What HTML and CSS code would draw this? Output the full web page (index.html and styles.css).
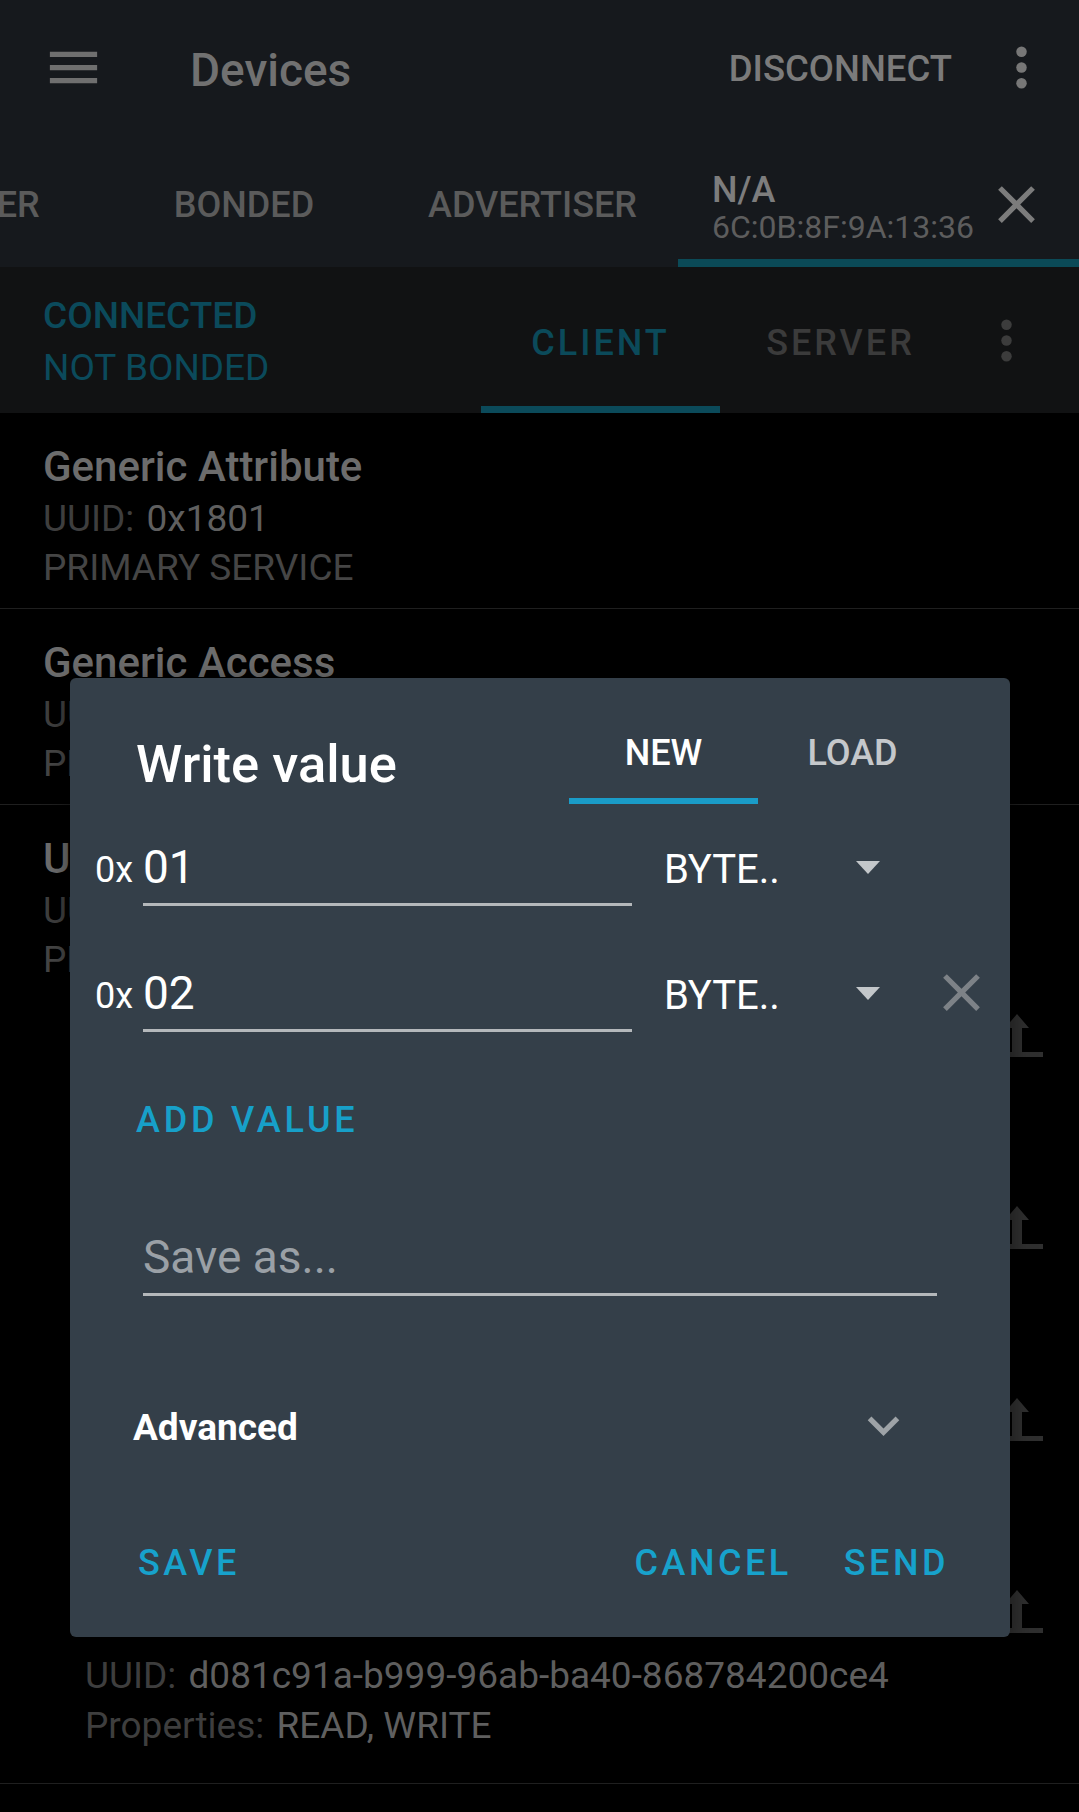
FILE: index.html
```html
<!DOCTYPE html>
<html>
<head>
<meta charset="utf-8">
<link rel="stylesheet" href="styles.css">
</head>
<body>
<div class="screen">
  <header class="appbar">
    <div class="toolbar">
      <svg class="icon63 menu" viewBox="0 0 24 24"><path d="M3 18h18v-2H3v2zm0-5h18v-2H3v2zm0-7v2h18V6H3z"/></svg>
      <div class="title">Devices</div>
      <div class="disconnect">DISCONNECT</div>
      <svg class="icon63 more" viewBox="0 0 24 24"><circle cx="12" cy="6" r="2"/><circle cx="12" cy="12" r="2"/><circle cx="12" cy="18" r="2"/></svg>
    </div>
    <div class="tabs">
      <div class="tab tab-scanner">SCANNER</div>
      <div class="tab tab-bonded">BONDED</div>
      <div class="tab tab-adv">ADVERTISER</div>
      <div class="tab tab-device">
        <div class="dev-text">
          <div class="dev-name">N/A</div>
          <div class="dev-mac">6C:0B:8F:9A:13:36</div>
        </div>
        <svg class="icon63 dev-close" viewBox="0 0 24 24"><path d="M19 6.41L17.59 5 12 10.59 6.41 5 5 6.41 10.59 12 5 17.59 6.41 19 12 13.41 17.59 19 19 17.59 13.41 12z"/></svg>
      </div>
    </div>
  </header>

  <div class="conn">
    <div class="status">
      <div class="st1">CONNECTED</div>
      <div class="st2">NOT BONDED</div>
    </div>
    <div class="ctab active">CLIENT</div>
    <div class="ctab">SERVER</div>
    <svg class="icon63 cmore" viewBox="0 0 24 24"><circle cx="12" cy="6" r="2"/><circle cx="12" cy="12" r="2"/><circle cx="12" cy="18" r="2"/></svg>
  </div>

  <main class="list">
    <div class="svc">
      <div class="svc-title">Generic Attribute</div>
      <div class="sub"><span class="lbl">UUID:</span> <span class="val">0x1801</span></div>
      <div class="sub type">PRIMARY SERVICE</div>
    </div>
    <div class="sep"></div>
    <div class="svc">
      <div class="svc-title">Generic Access</div>
      <div class="sub"><span class="lbl">UUID:</span> <span class="val">0x1800</span></div>
      <div class="sub type">PRIMARY SERVICE</div>
    </div>
    <div class="sep"></div>
    <div class="svc svc-last">
      <div class="svc-title">Unknown Service</div>
      <div class="sub"><span class="lbl">UUID:</span> <span class="val">d081c91a-b999-96ab-ba40-868784200ce4</span></div>
      <div class="sub type">PRIMARY SERVICE</div>
    </div>
    <div class="chr">
      <div class="chr-text">
        <div class="chr-title">Unknown Characteristic</div>
        <div class="sub"><span class="lbl">UUID:</span> <span class="val">d081c91a-b999-96ab-ba40-868784200ce4</span></div>
        <div class="sub"><span class="lbl">Properties:</span> <span class="val">READ, WRITE</span></div>
      </div>
      <svg class="upload" viewBox="0 0 52 44"><path d="M26 0L38 14H31V38H21V14H14Z M0 38H52V43H0Z"/></svg>
    </div>
    <div class="chr">
      <div class="chr-text">
        <div class="chr-title">Unknown Characteristic</div>
        <div class="sub"><span class="lbl">UUID:</span> <span class="val">d081c91a-b999-96ab-ba40-868784200ce4</span></div>
        <div class="sub"><span class="lbl">Properties:</span> <span class="val">READ, WRITE</span></div>
      </div>
      <svg class="upload" viewBox="0 0 52 44"><path d="M26 0L38 14H31V38H21V14H14Z M0 38H52V43H0Z"/></svg>
    </div>
    <div class="chr">
      <div class="chr-text">
        <div class="chr-title">Unknown Characteristic</div>
        <div class="sub"><span class="lbl">UUID:</span> <span class="val">d081c91a-b999-96ab-ba40-868784200ce4</span></div>
        <div class="sub"><span class="lbl">Properties:</span> <span class="val">READ, WRITE</span></div>
      </div>
      <svg class="upload" viewBox="0 0 52 44"><path d="M26 0L38 14H31V38H21V14H14Z M0 38H52V43H0Z"/></svg>
    </div>
    <div class="chr">
      <div class="chr-text">
        <div class="chr-title">Unknown Characteristic</div>
        <div class="sub"><span class="lbl">UUID:</span> <span class="val">d081c91a-b999-96ab-ba40-868784200ce4</span></div>
        <div class="sub"><span class="lbl">Properties:</span> <span class="val">READ, WRITE</span></div>
      </div>
      <svg class="upload" viewBox="0 0 52 44"><path d="M26 0L38 14H31V38H21V14H14Z M0 38H52V43H0Z"/></svg>
    </div>
    <div class="sep"></div>
  </main>

  <div class="dialog">
    <div class="dlg-head">
      <div class="dlg-title">Write value</div>
      <div class="dlg-tabs">
        <div class="dtab active">NEW</div>
        <div class="dtab">LOAD</div>
      </div>
    </div>
    <div class="vrow">
      <div class="hex">0x</div>
      <div class="vinput">01</div>
      <div class="vtype">BYTE..</div>
      <div class="tri"></div>
    </div>
    <div class="vrow">
      <div class="hex">0x</div>
      <div class="vinput">02</div>
      <div class="vtype">BYTE..</div>
      <div class="tri"></div>
      <svg class="icon63 vclose" viewBox="0 0 24 24"><path d="M19 6.41L17.59 5 12 10.59 6.41 5 5 6.41 10.59 12 5 17.59 6.41 19 12 13.41 17.59 19 19 17.59 13.41 12z"/></svg>
    </div>
    <div class="addval">ADD VALUE</div>
    <div class="saveas">Save as...</div>
    <div class="adv">
      <div class="adv-label">Advanced</div>
      <svg class="icon63 chev" viewBox="0 0 24 24"><path d="M16.59 8.59L12 13.17 7.41 8.59 6 10l6 6 6-6z"/></svg>
    </div>
    <div class="actions">
      <div class="btn">SAVE</div>
      <div class="btn btn-cancel">CANCEL</div>
      <div class="btn btn-send">SEND</div>
    </div>
  </div>
</div>
</body>
</html>
```

FILE: styles.css
```css
* { box-sizing: border-box; }
html, body { margin: 0; padding: 0; background: #000; }
body {
  font-family: Roboto, "Liberation Sans", sans-serif;
  width: 1079px;
  height: 1812px;
  overflow: hidden;
}
.screen { position: relative; width: 1079px; height: 1812px; overflow: hidden; background: #000; }

.icon63 { width: 63px; height: 63px; flex: 0 0 63px; display: block; }

/* App bar */
.appbar { background: #16191d; height: 267px; }
.toolbar { display: flex; align-items: center; height: 134px; }
.menu { fill: #6f6f6f; margin-left: 42px; }
.title { margin-left: 85px; margin-top: 6px; font-size: 46px; line-height: 46px; font-weight: 500; color: #717171; }
.disconnect { margin-left: auto; margin-top: 4px; font-size: 36.5px; line-height: 36px; font-weight: 500; color: #7b7b7b; }
.more { fill: #777; margin-left: 38px; margin-right: 26px; }

.tabs { display: flex; height: 133px; overflow: hidden; }
.tab { flex: 0 0 auto; display: flex; justify-content: center; padding-top: 53px; font-size: 36px; line-height: 36px; font-weight: 500; color: #5b5b5b; }
.tab-scanner { width: 286px; margin-left: -185px; }
.tab-bonded { width: 286px; }
.tab-adv { width: 291px; }
.tab-device { width: 401px; justify-content: flex-start; padding-top: 0; padding-left: 34px; border-bottom: 8px solid #0b4a57; }
.dev-text { padding-top: 38px; }
.dev-name { font-size: 36px; line-height: 36px; font-weight: 500; color: #7d7d7d; }
.dev-mac { margin-top: 3px; font-size: 32px; line-height: 32px; font-weight: 400; color: #5d5d5d; }
.dev-close { fill: #7c7c7c; margin-left: auto; margin-right: 31px; margin-top: 39px; }

/* Connection bar */
.conn { display: flex; height: 146px; background: #111213; }
.status { flex: 0 0 481px; padding-left: 43px; padding-top: 31px; color: #0b4a5b; font-size: 37px; line-height: 36px; }
.st1 { font-weight: 500; }
.st2 { margin-top: 16px; font-weight: 400; }
.ctab { flex: 0 0 239px; height: 146px; padding-top: 58px; text-align: center; font-size: 36px; line-height: 36px; font-weight: 500; letter-spacing: 3px; color: #3b3b3b; }
.ctab + .ctab { flex-basis: 241px; }
.ctab.active { color: #0b4a5a; border-bottom: 7px solid #0b4a5a; }
.cmore { fill: #3c3c3c; margin-top: 42px; margin-left: 14px; }

/* List */
.list { background: #000; }
.svc { padding: 33px 0 20px 43px; height: 195px; }
.svc-last { height: 210px; padding-top: 33px; }
.svc-title { font-size: 42px; line-height: 42px; font-weight: 500; color: #6c6c6c; }
.sub { margin-top: 13px; font-size: 37px; line-height: 36px; color: #5e5e5e; white-space: nowrap; }
.lbl { color: #3e3e3e; }
.val { color: #5f5f5f; margin-left: 3px; }
.type { color: #454545; }
.sep { height: 1px; background: #1f1f1f; }

.chr { display: flex; justify-content: space-between; align-items: flex-start; height: 192px; padding-left: 85px; }
.chr-text { padding-top: 4px; }
.chr-title { font-size: 38px; line-height: 38px; font-weight: 500; color: #6c6c6c; }
.chr .sub { margin-top: 25px; }
.chr .sub + .sub { margin-top: 14px; }
.upload { width: 52px; height: 44px; fill: #2f2f2f; margin-top: -1px; margin-right: 36px; flex: 0 0 52px; }

/* Dialog */
.dialog {
  position: absolute;
  left: 70px;
  top: 678px;
  width: 940px;
  height: 959px;
  background: #343f49;
  border-radius: 6px;
  color: #fff;
  box-shadow: 0 6px 24px rgba(0,0,0,0.5);
}
.dlg-head { display: flex; justify-content: space-between; align-items: flex-start; padding: 57px 63px 0 66px; }
.dlg-title { margin-top: 3px; font-size: 52.5px; line-height: 52px; font-weight: 500; color: #fff; }
.dlg-tabs { display: flex; }
.dtab { width: 189px; height: 69px; text-align: center; font-size: 36px; line-height: 36px; font-weight: 500; color: #c5c8cb; }
.dtab.active { color: #fff; border-bottom: 6px solid #1a9cc8; }

.vrow { display: flex; align-items: flex-start; height: 126px; padding-left: 25px; }
.hex { width: 48px; margin-top: 48px; font-size: 36px; line-height: 36px; color: #fff; }
.vinput { width: 489px; margin-top: 40px; font-size: 46px; line-height: 46px; padding-bottom: 13px; border-bottom: 3px solid #b4b8bb; color: #fff; }
.vtype { width: 192px; margin-left: 32px; margin-top: 46px; font-size: 40px; line-height: 40px; color: #fff; }
.tri { width: 0; height: 0; margin-top: 57px; border-left: 12.5px solid transparent; border-right: 12.5px solid transparent; border-top: 13px solid #c3c7ca; }
.vclose { fill: #7d8287; margin-left: 50px; margin-top: 31px; }

.addval { margin-top: 46px; padding-left: 66px; font-size: 36px; line-height: 36px; font-weight: 500; letter-spacing: 3.8px; color: #17a0c9; }
.saveas { margin-top: 96px; margin-left: 73px; width: 794px; font-size: 46px; line-height: 46px; padding-bottom: 13px; border-bottom: 3px solid #b4b8bb; color: #9aa0a6; }
.adv { display: flex; justify-content: space-between; align-items: flex-start; margin-top: 98px; padding-left: 63px; padding-right: 95px; }
.adv-label { margin-top: 16px; font-size: 37px; line-height: 36px; font-weight: 700; color: #fff; }
.chev { fill: #9ea3a7; }

.actions { display: flex; margin-top: 88px; padding-left: 68px; }
.btn { font-size: 36px; line-height: 36px; font-weight: 500; letter-spacing: 3.5px; color: #17a2cc; }
.btn-cancel { margin-left: auto; }
.btn-send { margin-left: 52px; margin-right: 61px; }
```
